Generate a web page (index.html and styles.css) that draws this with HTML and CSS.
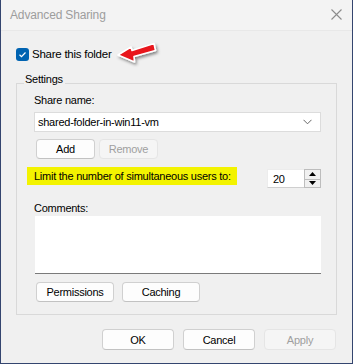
FILE: index.html
```html
<!DOCTYPE html>
<html lang="en">
<head>
  <meta charset="UTF-8">
  <title>Advanced Sharing</title>
  <link rel="stylesheet" href="styles.css">
</head>
<body>

  <div class="window">
    <div class="titlebar">
      <span class="title">Advanced Sharing</span>
      <svg class="close" width="11" height="11" viewBox="0 0 11 11">
        <path d="M0.5 0.5 L10.5 10.5 M10.5 0.5 L0.5 10.5" stroke="#8c8c8c" stroke-width="1.1" fill="none"/>
      </svg>
    </div>

    <div class="content">
      <div class="share">
        <span class="checkbox">
          <svg width="13" height="13" viewBox="0 0 13 13">
            <path d="M3.5 6.8 L5.5 8.7 L9.5 4.5" stroke="#fff" stroke-width="1.2" fill="none"/>
          </svg>
        </span>
        <span>Share this folder</span>
        <!-- red annotation arrow -->
        <svg class="arrow" width="48" height="30" viewBox="0 0 48 30">
          <defs>
            <filter id="sh" x="-20%" y="-30%" width="150%" height="170%">
              <feDropShadow dx="1.5" dy="2" stdDeviation="1.4" flood-color="#000" flood-opacity="0.45"/>
            </filter>
          </defs>
          <path d="M4 17 L17 9 L18 12.5 L40 5.5 L41.5 12.5 L20 18.5 L20.5 24 Z"
                fill="#e8141b" stroke="#fff" stroke-width="1.6" stroke-linejoin="round" filter="url(#sh)"/>
        </svg>
      </div>

      <fieldset class="settings">
        <legend>Settings</legend>

        <div class="label first">Share name:</div>
        <div class="combo">
          <span>shared-folder-in-win11-vm</span>
          <svg width="9" height="6" viewBox="0 0 9 6">
            <path d="M0.5 0.8 L4.5 4.8 L8.5 0.8" stroke="#666" stroke-width="1" fill="none"/>
          </svg>
        </div>

        <div class="row">
          <button class="btn small">Add</button>
          <button class="btn small" disabled>Remove</button>
        </div>

        <div class="limit">
          <div class="limit-text"><span class="highlight">Limit the number of simultaneous users to:</span></div>
          <div class="spin">
            <div class="spin-value">20</div>
            <div class="spin-buttons">
              <div class="spin-btn">
                <svg width="7" height="4" viewBox="0 0 7 4"><path d="M0 4 L3.5 0 L7 4 Z" fill="#000"/></svg>
              </div>
              <div class="spin-btn">
                <svg width="7" height="4" viewBox="0 0 7 4"><path d="M0 0 L3.5 4 L7 0 Z" fill="#000"/></svg>
              </div>
            </div>
          </div>
        </div>

        <div class="label comments-label">Comments:</div>
        <div class="textarea"></div>

        <div class="row perms">
          <button class="btn wide">Permissions</button>
          <button class="btn wide">Caching</button>
        </div>
      </fieldset>

      <div class="footer">
        <button class="btn footer-btn">OK</button>
        <button class="btn footer-btn">Cancel</button>
        <button class="btn footer-btn" disabled>Apply</button>
      </div>
    </div>
  </div>

</body>
</html>
```

FILE: styles.css
```css
:root {
  --face: #f0f0f0;
  --line: #d9d9d9;
  --text: #000;
  --frame: #34456f;
}

body {
  margin: 0;
  font-family: "Liberation Sans", Arial, sans-serif;
  font-size: 11px;
  letter-spacing: -0.25px;
  color: var(--text);
}

.window {
  width: 353px;
  height: 364px;
  box-sizing: border-box;
  background-color: var(--face);
  border-left: 1px solid var(--frame);
  border-right: 1px solid var(--frame);
  border-bottom: 1px solid var(--frame);
}

.titlebar {
  height: 31px;
  background-color: #f3f3f3;
  border-bottom: 1px solid #e8e8e8;
  display: flex;
  align-items: center;
  justify-content: space-between;
  padding: 0 10px 0 9px;
  box-sizing: border-box;
}

.title {
  color: #9d9d9d;
  font-size: 12px;
  letter-spacing: -0.15px;
  margin-top: -1px;
}

.close {
  margin-top: -1px;
}

.content {
  padding: 15px 15px 0 15px;
}

.share {
  position: relative;
  display: flex;
  align-items: center;
  height: 16px;
  gap: 3px;
  font-size: 11.5px;
}

.checkbox {
  width: 13px;
  height: 13px;
  border-radius: 3px;
  background-color: #0063b1;
  display: inline-flex;
}

.arrow {
  position: absolute;
  left: 98px;
  top: -8px;
}

.settings {
  margin: 9px 0 0 0;
  padding: 0 15px 12px 17px;
  border: 1px solid var(--line);
  width: 321px;
  box-sizing: border-box;
}

.settings legend {
  padding: 0 2px 8px 1px;
  margin-left: -10px;
  line-height: 16px;
}

.label {
  line-height: 16px;
}

.label.first {
  margin-top: -3px;
}

.combo {
  margin-top: 4px;
  height: 20px;
  width: 287px;
  box-sizing: border-box;
  background-color: #fff;
  border: 1px solid #dcdcdc;
  display: flex;
  align-items: center;
  justify-content: space-between;
  padding: 0 8px 0 3px;
}

.row {
  display: flex;
  gap: 4px;
  margin-top: 7px;
  padding-left: 2px;
}

.btn {
  font-family: inherit;
  font-size: 11px;
  letter-spacing: -0.25px;
  color: #000;
  background-color: #fdfdfd;
  border: 1px solid #d0d0d0;
  border-bottom-color: #c2c2c2;
  border-radius: 4px;
  height: 20px;
  padding: 0;
}

.btn:disabled {
  color: #9f9f9f;
  background-color: #f5f5f5;
  border-color: #e5e5e5;
}

.small {
  width: 59px;
}

.limit {
  display: grid;
  grid-template-columns: 1fr 54px;
  align-items: start;
  margin-top: 8px;
  margin-left: -7px;
  width: 294px;
}

.highlight {
  display: inline-block;
  background-color: #f3f300;
  padding: 1px 6px 1px 7px;
  line-height: 16px;
}

.spin {
  display: grid;
  grid-template-columns: 37px 17px;
  height: 19px;
  margin-top: 2px;
}

.spin-value {
  box-sizing: border-box;
  background-color: #fff;
  border: 1px solid #ececec;
  border-right: none;
  border-bottom-color: #cfcfcf;
  padding: 2px 0 0 5px;
  line-height: 14px;
}

.spin-buttons {
  box-sizing: border-box;
  border: 1px solid #bdbdbd;
  display: grid;
  grid-template-rows: 1fr 1fr;
}

.spin-btn {
  display: flex;
  align-items: center;
  justify-content: center;
  background-color: #f0f0f0;
}

.spin-btn + .spin-btn {
  border-top: 1px solid #bdbdbd;
}

.comments-label {
  margin-top: 12px;
}

.textarea {
  margin-left: 1px;
  width: 286px;
  height: 58px;
  background-color: #fff;
  border-bottom: 1px solid #7a7a7a;
  box-sizing: border-box;
}

.perms {
  gap: 8px;
  margin-top: 8px;
}

.wide {
  width: 78px;
}

.footer {
  display: flex;
  justify-content: flex-end;
  gap: 9px;
  margin-top: 14px;
  padding-right: 1px;
}

.footer-btn {
  width: 72px;
  height: 21px;
}
```
